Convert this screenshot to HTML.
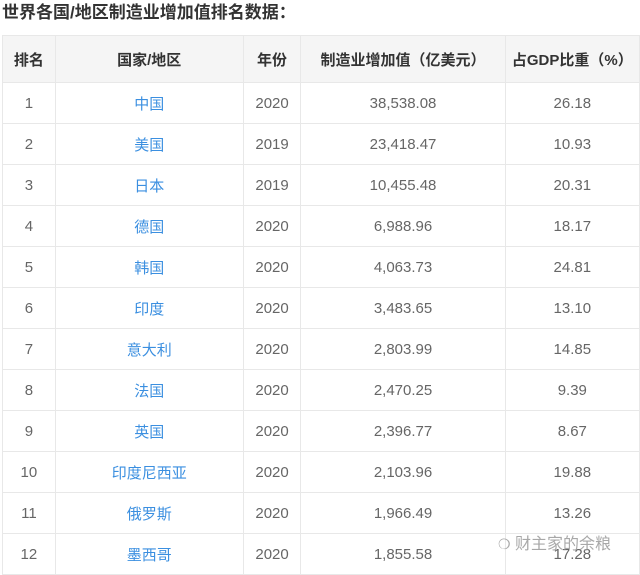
<!DOCTYPE html>
<html><head><meta charset="utf-8"><style>
body{margin:0;background:#fff;width:640px;height:570px;overflow:hidden;font-family:"Liberation Sans","Noto Sans CJK SC",sans-serif;}
h1{position:absolute;left:2px;top:1px;margin:0;font-size:17px;font-weight:bold;color:#333;line-height:24px;}
table{position:absolute;left:2px;top:35px;border-collapse:collapse;table-layout:fixed;}
td,th{border:1px solid #e8e8e8;text-align:center;font-size:15px;color:#666;padding:0;height:40px;font-weight:normal;}
th{background:#f5f5f5;font-weight:bold;color:#333;height:46px;}
a{color:#3b8fe0;text-decoration:none}
.wm{position:absolute;left:498px;top:530px;font-size:16px;color:#999;opacity:.85}
</style></head><body>
<h1>世界各国/地区制造业增加值排名数据：</h1>
<table>
<colgroup><col style="width:53px"><col style="width:189px"><col style="width:58px"><col style="width:205px"><col style="width:135px"></colgroup>
<tr><th>排名</th><th>国家/地区</th><th>年份</th><th>制造业增加值（亿美元）</th><th>占GDP比重（%）</th></tr>
<tr><td>1</td><td><a>中国</a></td><td>2020</td><td>38,538.08</td><td>26.18</td></tr>
<tr><td>2</td><td><a>美国</a></td><td>2019</td><td>23,418.47</td><td>10.93</td></tr>
<tr><td>3</td><td><a>日本</a></td><td>2019</td><td>10,455.48</td><td>20.31</td></tr>
<tr><td>4</td><td><a>德国</a></td><td>2020</td><td>6,988.96</td><td>18.17</td></tr>
<tr><td>5</td><td><a>韩国</a></td><td>2020</td><td>4,063.73</td><td>24.81</td></tr>
<tr><td>6</td><td><a>印度</a></td><td>2020</td><td>3,483.65</td><td>13.10</td></tr>
<tr><td>7</td><td><a>意大利</a></td><td>2020</td><td>2,803.99</td><td>14.85</td></tr>
<tr><td>8</td><td><a>法国</a></td><td>2020</td><td>2,470.25</td><td>9.39</td></tr>
<tr><td>9</td><td><a>英国</a></td><td>2020</td><td>2,396.77</td><td>8.67</td></tr>
<tr><td>10</td><td><a>印度尼西亚</a></td><td>2020</td><td>2,103.96</td><td>19.88</td></tr>
<tr><td>11</td><td><a>俄罗斯</a></td><td>2020</td><td>1,966.49</td><td>13.26</td></tr>
<tr><td>12</td><td><a>墨西哥</a></td><td>2020</td><td>1,855.58</td><td>17.28</td></tr>
</table>
<div class="wm"><span style="font-size:14px">❍</span> 财主家的余粮</div>
</body></html>
